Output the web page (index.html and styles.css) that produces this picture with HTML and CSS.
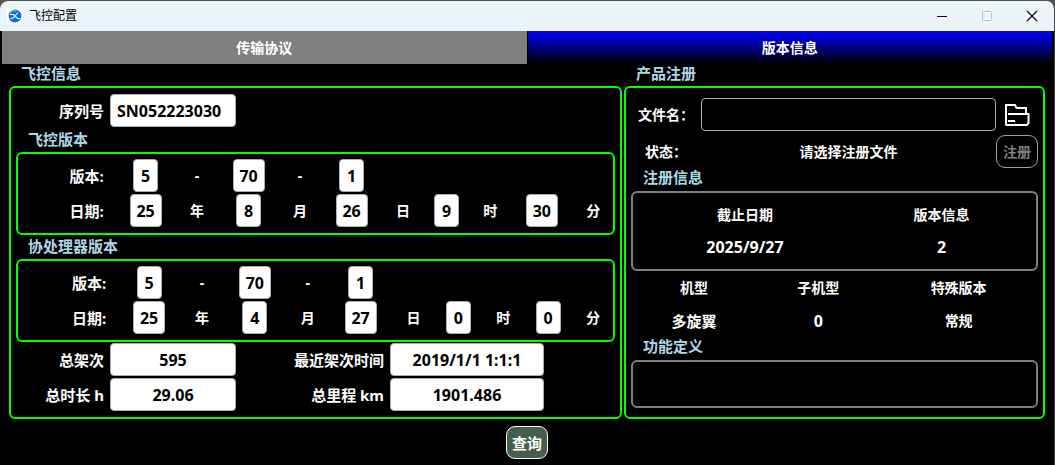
FILE: index.html
```
<!DOCTYPE html>
<html lang="zh-CN">
<head>
	<meta charset="utf-8">
	<meta name="viewport" content="width=device-width, initial-scale=1">
	<title>飞控配置</title>
	<link rel="stylesheet" href="styles.css">
</head>
<body>
<div class="window">
	<header class="titlebar">
		<svg class="logo" width="16" height="16" viewBox="0 0 16 16">
			<rect width="16" height="16" fill="#fff"/>
			<circle cx="8" cy="8" r="6.4" fill="#0a6be6"/>
			<path d="M3 5.5c1-2.4 4-3.6 6.5-2.6" fill="none" stroke="#38b6ff" stroke-width="1.4"/>
			<path d="M3 6.5h3.5L8 8l3-3.5M3.5 10.5L6 10l2-2 2.5 2.5H13" fill="none" stroke="#fff" stroke-width="1.1"/>
		</svg>
		<h1>飞控配置</h1>
		<div class="controls">
			<button type="button" aria-label="最小化"><svg width="12" height="12" viewBox="0 0 12 12"><path d="M1 6.5h10" stroke="#000"/></svg></button>
			<button type="button" aria-label="最大化" disabled><svg width="12" height="12" viewBox="0 0 12 12"><rect x="1.5" y="1.5" width="9" height="9" rx="1" fill="none" stroke="#b9c2c6"/></svg></button>
			<button type="button" aria-label="关闭"><svg width="12" height="12" viewBox="0 0 12 12"><path d="M1 1l10 10M11 1L1 11" stroke="#000" stroke-width="1.1"/></svg></button>
		</div>
	</header>

	<nav class="tabs">
		<button type="button" class="tab">传输协议</button>
		<button type="button" class="tab active">版本信息</button>
	</nav>

	<main class="columns">
		<section class="column">
			<h2>飞控信息</h2>
			<div class="group">
				<div class="fields serial">
					<label for="sn">序列号</label>
					<input type="text" id="sn" class="sn" value="SN052223030" readonly>
				</div>

				<h3>飞控版本</h3>
				<div class="group version fc">
					<span class="name">版本:</span>
					<input type="text" class="n1" value="5" aria-label="主版本" readonly>
					<span>-</span>
					<input type="text" class="n2" value="70" aria-label="次版本" readonly>
					<span>-</span>
					<input type="text" class="n1" value="1" aria-label="修订版本" readonly>
					<span class="name first">日期:</span>
					<input type="text" class="n2" id="fc-y" value="25" readonly>
					<label for="fc-y">年</label>
					<input type="text" class="n1" id="fc-m" value="8" readonly>
					<label for="fc-m">月</label>
					<input type="text" class="n2" id="fc-d" value="26" readonly>
					<label for="fc-d">日</label>
					<input type="text" class="n1" id="fc-h" value="9" readonly>
					<label for="fc-h">时</label>
					<input type="text" class="n2" id="fc-i" value="30" readonly>
					<label for="fc-i">分</label>
				</div>

				<h3>协处理器版本</h3>
				<div class="group version co">
					<span class="name">版本:</span>
					<input type="text" class="n1" value="5" aria-label="主版本" readonly>
					<span>-</span>
					<input type="text" class="n2" value="70" aria-label="次版本" readonly>
					<span>-</span>
					<input type="text" class="n1" value="1" aria-label="修订版本" readonly>
					<span class="name first">日期:</span>
					<input type="text" class="n2" id="co-y" value="25" readonly>
					<label for="co-y">年</label>
					<input type="text" class="n1" id="co-m" value="4" readonly>
					<label for="co-m">月</label>
					<input type="text" class="n2" id="co-d" value="27" readonly>
					<label for="co-d">日</label>
					<input type="text" class="n1" id="co-h" value="0" readonly>
					<label for="co-h">时</label>
					<input type="text" class="n1" id="co-i" value="0" readonly>
					<label for="co-i">分</label>
				</div>

				<div class="fields totals">
					<label for="flights">总架次</label>
					<input type="text" id="flights" value="595" readonly>
					<label for="last">最近架次时间</label>
					<input type="text" id="last" value="2019/1/1 1:1:1" readonly>
					<label for="hours" class="first">总时长 h</label>
					<input type="text" id="hours" value="29.06" readonly>
					<label for="km">总里程 km</label>
					<input type="text" id="km" value="1901.486" readonly>
				</div>
			</div>
		</section>

		<section class="column">
			<h2>产品注册</h2>
			<div class="group register">
				<div class="row">
					<label for="file">文件名：</label>
					<input type="text" id="file" class="file">
					<button type="button" class="open" aria-label="打开文件">
						<svg width="26" height="24" viewBox="0 0 26 24" fill="none" stroke="#fff" stroke-width="2">
							<path d="M2 22V2h9l1.5 3H22v5M4 11h20.5v9L23 22H1.5"/>
							<path d="M4 18h7"/>
						</svg>
					</button>
				</div>
				<div class="row status">
					<span class="name">状态：</span>
					<output>请选择注册文件</output>
					<button type="button" class="btn" disabled>注册</button>
				</div>

				<h3>注册信息</h3>
				<div class="group gray">
					<table>
						<colgroup><col class="w-date"><col></colgroup>
						<tr><th>截止日期</th><th>版本信息</th></tr>
						<tr><td>2025/9/27</td><td>2</td></tr>
					</table>
				</div>
				<table class="models">
					<colgroup><col class="w-type"><col class="w-sub"><col></colgroup>
					<tr><th>机型</th><th>子机型</th><th>特殊版本</th></tr>
					<tr><td class="type">多旋翼</td><td>0</td><td class="special">常规</td></tr>
				</table>

				<h3>功能定义</h3>
				<div class="group gray features"></div>
			</div>
		</section>
	</main>

	<footer class="footer">
		<button type="button" class="btn query">查询</button>
	</footer>
</div>
</body>
</html>
```
FILE: styles.css
```
*
{
	margin: 0;
	padding: 0;
	box-sizing: border-box;
}
body
{
	background: #55534f;
	min-height: 100vh;
	display: flex;
	padding-top: 1px;
	color: #fff;
	font: bold 14px/20px "Noto Sans", "Noto Sans CJK SC", sans-serif;
}
button, input
{
	font: inherit;
	color: inherit;
}
.window
{
	flex: 1;
	display: flex;
	flex-direction: column;
	min-width: 0;
	background: #000;
	border-radius: 8px 8px 0 0;
	border-right: 1px solid #444;
	overflow: hidden;
}

/* title bar */
.titlebar
{
	display: flex;
	align-items: center;
	height: 30px;
	padding-left: 7px;
	background: #ebf4f9;
	color: #000;
}
.titlebar h1
{
	flex: 1;
	margin-left: 6px;
	font-size: 12px;
	font-weight: 400;
	line-height: 16px;
}
.controls
{
	display: flex;
}
.controls button
{
	display: grid;
	place-items: center;
	width: 45px;
	height: 30px;
	border: none;
	background: none;
}

/* tabs */
.tabs
{
	display: flex;
	gap: 1px;
	padding: 0 2px;
}
.tab
{
	flex: 1;
	height: 33px;
	border: none;
	background: #808080;
}
.tab.active
{
	background: linear-gradient(#00f, #000);
}

/* groups */
.columns
{
	display: grid;
	grid-template-columns: 613fr 421fr;
	gap: 2px;
	padding: 0 9px;
}
.column
{
	display: flex;
	flex-direction: column;
}
h2, h3
{
	color: #add8e6;
	font-size: 15px;
	padding-left: 12px;
}
h2
{
	line-height: 18px;
	padding-bottom: 4px;
}
h3
{
	line-height: 22px;
	padding-bottom: 2px;
}
.group
{
	border: 2px solid #0f0;
	border-radius: 6px;
	padding: 5px;
}
.column > .group
{
	flex: 1;
	padding: 6px 5px;
}
.group.gray
{
	border-color: #808080;
	padding: 6px 10px 6px 0;
}

input
{
	height: 33px;
	width: 100%;
	border: 1px solid #abadb3;
	border-radius: 4px;
	background: #fff;
	color: #000;
	font-size: 16px;
	text-align: center;
	outline: none;
}
.fields
{
	display: grid;
	grid-template-columns: 88fr 126fr 142fr 154fr 65fr;
	gap: 2px 6px;
	align-items: center;
	font-size: 15px;
}
.fields label
{
	text-align: right;
}
.fields .first
{
	grid-column: 1;
}
.fields .sn
{
	text-align: left;
	padding-left: 6px;
}
.serial
{
	margin-bottom: 1px;
}
.totals
{
	margin-top: 1px;
}

.version
{
	display: grid;
	row-gap: 2px;
	padding: 5px 4px 6px 0;
	align-items: center;
	justify-items: center;
}
.version.fc
{
	grid-template-columns: 41fr 32fr 14fr 32fr 14fr 32fr 14fr 25fr 14fr 32fr 14fr;
}
.version.co
{
	grid-template-columns: 41fr 32fr 14fr 32fr 14fr 32fr 14fr 25fr 14fr 25fr 14fr;
}
.version .name
{
	justify-self: end;
	padding-right: 6px;
	font-size: 15px;
}
.version .first
{
	grid-column: 1;
}
.version .n1
{
	width: 25px;
}
.version .n2
{
	width: 32px;
}

/* registration */
.row
{
	display: flex;
	align-items: center;
	padding-left: 7px;
}
.register > .row:first-child
{
	margin-top: 4px;
}
.row label
{
	width: 63px;
}
.row .file
{
	flex: 1;
	background: #000;
	color: #fff;
	text-align: left;
	padding: 0 6px;
}
.open
{
	display: grid;
	place-items: center;
	width: 42px;
	height: 33px;
	border: none;
	background: none;
}
.status
{
	margin-top: 4px;
	padding-left: 14px;
}
.status .name
{
	width: 56px;
}
.status output
{
	flex: 1;
	text-align: center;
}
.btn
{
	width: 42px;
	height: 33px;
	border: 1px solid #fff;
	border-radius: 9px;
	background: #000;
}
.btn:disabled
{
	border-color: #a0a0a0;
	color: #808080;
}
.register h3
{
	line-height: 18px;
	padding-bottom: 5px;
}
table
{
	width: 100%;
	table-layout: fixed;
	border-collapse: collapse;
	text-align: center;
}
th, td
{
	height: 32px;
}
td
{
	font-size: 16px;
}
.models th, .models td
{
	height: 33px;
}
.models .type
{
	font-size: 15px;
}
.models .special
{
	font-size: 14px;
}
.w-date
{
	width: 57%;
}
.w-type
{
	width: 31%;
}
.w-sub
{
	width: 30%;
}
.features
{
	height: 48px;
}

.footer
{
	display: flex;
	justify-content: center;
	padding: 7px 0 6px;
}
.query
{
	background: #465f4a;
	font-size: 15px;
}
```
